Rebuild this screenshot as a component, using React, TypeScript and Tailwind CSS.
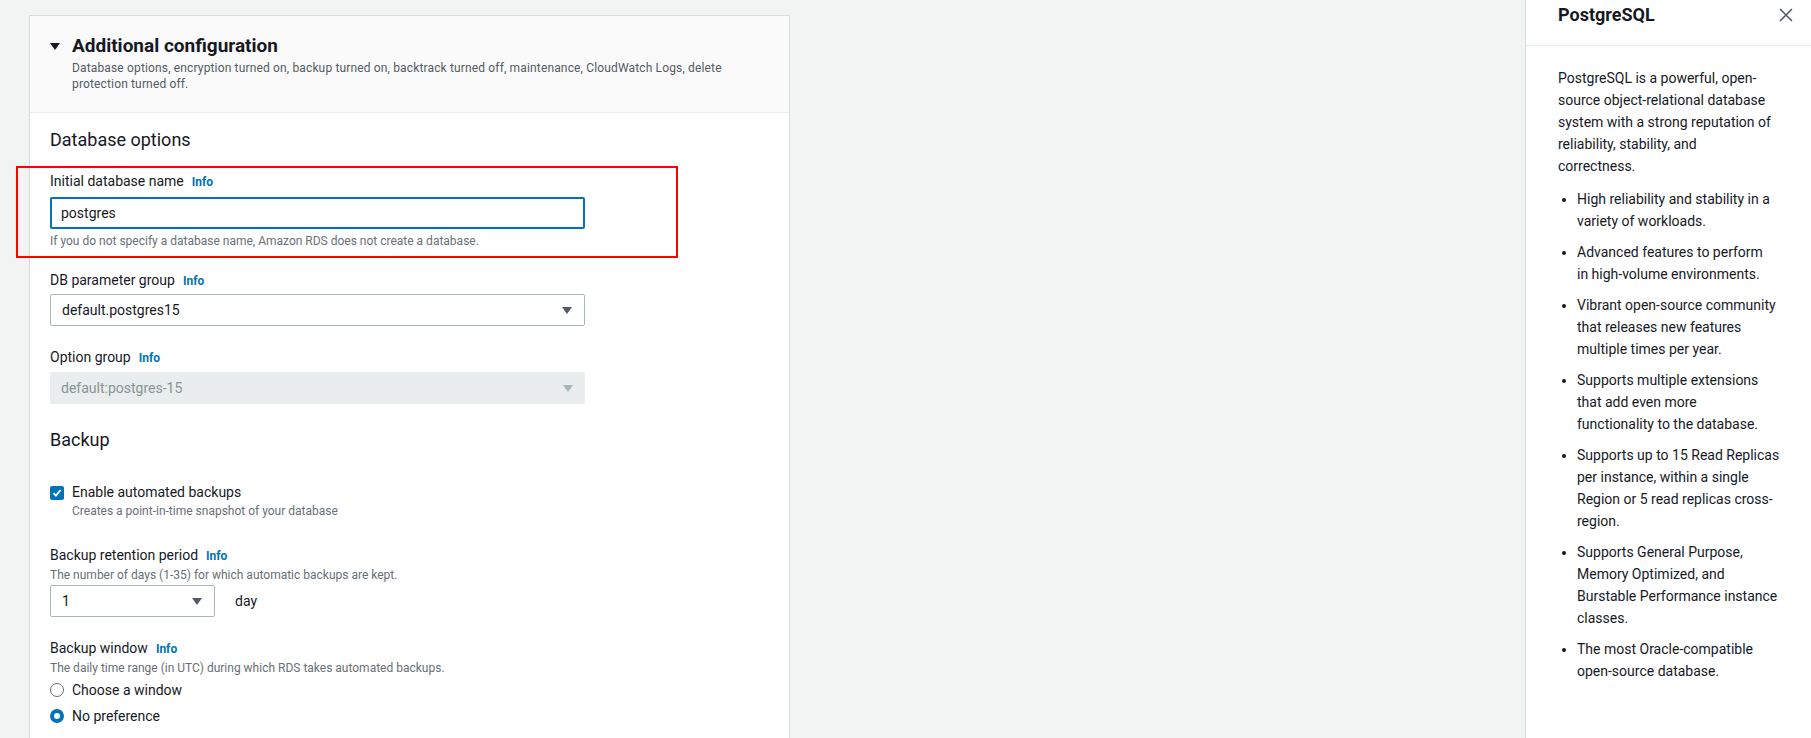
import type { ReactNode } from "react";

const Caret = ({ color = "#545b64" }: { color?: string }) => (
  <svg width="10" height="7" viewBox="0 0 10 7" aria-hidden>
    <path d="M0 0h10L5 7z" fill={color} />
  </svg>
);

const Info = () => <span className="ml-2 text-[12px] font-bold text-[#0073bb]">Info</span>;

const Label = ({ children, info = true }: { children: ReactNode; info?: boolean }) => (
  <div className="flex items-baseline text-[14px] leading-[22px] text-[#16191f]">
    <span>{children}</span>
    {info && <Info />}
  </div>
);

const Hint = ({ children }: { children: ReactNode }) => (
  <div className="text-[12px] leading-[16px] text-[#687078]">{children}</div>
);

const Select = ({ value, disabled, width = "w-[535px]" }: { value: string; disabled?: boolean; width?: string }) => (
  <div
    className={`${width} flex h-[32px] items-center justify-between rounded-[2px] pl-[11px] pr-[12px] text-[14px] ${
      disabled ? "bg-[#eaeded] text-[#879596]" : "border border-[#aab7b8] bg-white pl-[10px] pr-[11px] text-[#16191f]"
    }`}
  >
    <span>{value}</span>
    <Caret color={disabled ? "#aab7b8" : "#545b64"} />
  </div>
);

const Radio = ({ checked, label }: { checked?: boolean; label: string }) => (
  <div className="flex items-center gap-2 text-[14px] leading-[22px] text-[#16191f]">
    <span
      className={`h-[14px] w-[14px] rounded-full bg-white ${
        checked ? "border-[4px] border-[#0073bb]" : "border border-[#687078]"
      }`}
    />
    <span>{label}</span>
  </div>
);

const helpLines: string[][] = [
  ["High reliability and stability in a", "variety of workloads."],
  ["Advanced features to perform", "in high-volume environments."],
  ["Vibrant open-source community", "that releases new features", "multiple times per year."],
  ["Supports multiple extensions", "that add even more", "functionality to the database."],
  ["Supports up to 15 Read Replicas", "per instance, within a single", "Region or 5 read replicas cross-", "region."],
  ["Supports General Purpose,", "Memory Optimized, and", "Burstable Performance instance", "classes."],
  ["The most Oracle-compatible", "open-source database."],
];

const HelpPanel = () => (
  <aside className="h-full w-[286px] shrink-0 border-l border-[#d5dbdb] bg-white text-[#16191f]">
    <div className="flex h-[46px] items-start justify-between border-b border-[#eaeded] pl-[32px] pr-[18px] pt-[4px]">
      <h2 className="text-[18px] font-bold leading-[22px]">PostgreSQL</h2>
      <svg width="14" height="14" viewBox="0 0 14 14" className="mt-[4px]" aria-hidden>
        <path d="M1 1l12 12M13 1L1 13" stroke="#545b64" strokeWidth="1.6" fill="none" />
      </svg>
    </div>
    <div className="pl-[32px] pr-[20px] pt-[21px] text-[14px] leading-[22px]">
      <p className="whitespace-nowrap">
        PostgreSQL is a powerful, open-
        <br />
        source object-relational database
        <br />
        system with a strong reputation of
        <br />
        reliability, stability, and
        <br />
        correctness.
      </p>
      <ul className="mt-[11px] list-disc pl-[19px]">
        {helpLines.map((lines, i) => (
          <li key={i} className="mb-[9px] whitespace-nowrap">
            {lines.map((l, j) => (
              <span key={j}>
                {l}
                {j < lines.length - 1 && <br />}
              </span>
            ))}
          </li>
        ))}
      </ul>
    </div>
  </aside>
);

export default function App() {
  return (
    <div className="flex h-[738px] w-full overflow-hidden bg-[#f2f3f3] font-['Roboto','Liberation_Sans',sans-serif]">
      <div className="flex-1 pl-[29px] pt-[15px]">
        <section className="w-[761px] border border-[#d9dcdc] bg-white pb-10">
          <header className="border-b border-[#eaeded] bg-[#fafafa] pb-[20px] pl-[20px] pt-[18px]">
            <div className="flex items-center gap-[12px]">
              <Caret color="#16191f" />
              <h2 className="text-[19px] font-bold leading-[24px] text-[#16191f]">Additional configuration</h2>
            </div>
            <p className="mt-[2px] pl-[22px] text-[12px] leading-[16px] tracking-[0.15px] text-[#545b64]">
              Database options, encryption turned on, backup turned on, backtrack turned off, maintenance, CloudWatch Logs, delete
              <br />
              protection turned off.
            </p>
          </header>

          <div className="pl-[20px] pt-[16px]">
            <h3 className="text-[18px] leading-[22px] text-[#16191f]">Database options</h3>

            <div className="relative mt-[19px]">
              <span className="absolute -left-[34px] -top-[4px] h-[92px] w-[662px] border-2 border-[#ff0000]" />
              <Label>Initial database name</Label>
              <div className="mt-[4px] flex h-[32px] w-[535px] items-center rounded-[2px] border-2 border-[#0073bb] pl-[9px] text-[14px] text-[#16191f]">
                postgres
              </div>
              <div className="mt-[4px]">
                <Hint>If you do not specify a database name, Amazon RDS does not create a database.</Hint>
              </div>
            </div>

            <div className="mt-[20px]">
              <Label>DB parameter group</Label>
              <div className="mt-[2px]">
                <Select value="default.postgres15" />
              </div>
            </div>

            <div className="mt-[20px]">
              <Label>Option group</Label>
              <div className="mt-[3px]">
                <Select value="default:postgres-15" disabled />
              </div>
            </div>

            <h3 className="mt-[25px] text-[18px] leading-[22px] text-[#16191f]">Backup</h3>

            <div className="mt-[30px] flex items-start gap-2">
              <span className="mt-[5px] flex h-[14px] w-[14px] items-center justify-center rounded-[2px] bg-[#0073bb]">
                <svg width="10" height="10" viewBox="0 0 10 10" aria-hidden>
                  <path d="M1.5 5.2l2.4 2.4L8.6 2" stroke="#fff" strokeWidth="1.8" fill="none" />
                </svg>
              </span>
              <div>
                <div className="text-[14px] leading-[22px] text-[#16191f]">Enable automated backups</div>
                <Hint>Creates a point-in-time snapshot of your database</Hint>
              </div>
            </div>

            <div className="mt-[25px]">
              <Label>Backup retention period</Label>
              <Hint>The number of days (1-35) for which automatic backups are kept.</Hint>
              <div className="mt-[2px] flex items-center gap-[20px]">
                <Select value="1" width="w-[165px]" />
                <span className="text-[14px] text-[#16191f]">day</span>
              </div>
            </div>

            <div className="mt-[20px]">
              <Label>Backup window</Label>
              <Hint>The daily time range (in UTC) during which RDS takes automated backups.</Hint>
              <div className="mt-[3px] flex flex-col gap-[4px]">
                <Radio label="Choose a window" />
                <Radio checked label="No preference" />
              </div>
            </div>
          </div>
        </section>
      </div>
      <HelpPanel />
    </div>
  );
}
